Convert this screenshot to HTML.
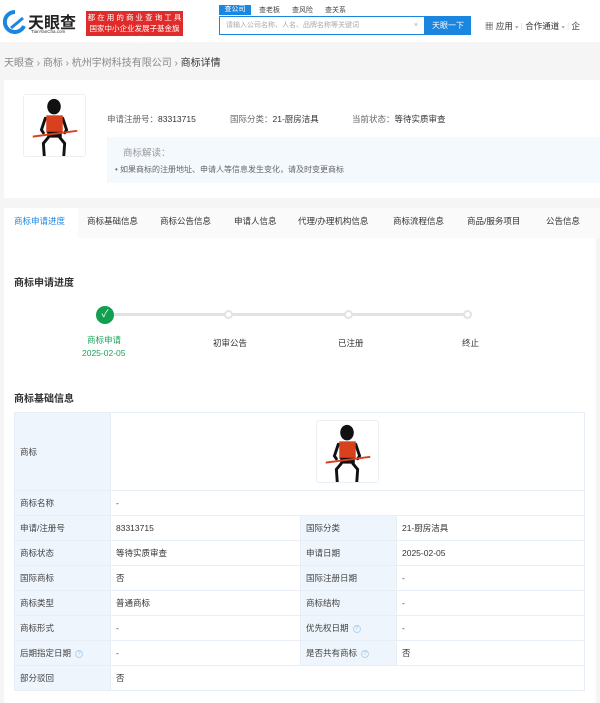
<!DOCTYPE html>
<html><head><meta charset="utf-8"><style>
*{margin:0;padding:0;box-sizing:border-box}
body{width:600px;height:703px;overflow:hidden;background:#f5f5f5;font-family:"Liberation Sans","Noto Sans CJK SC",sans-serif;font-size:9px;color:#333;position:relative}
.abs{position:absolute}
.hdr{left:0;top:0;width:600px;height:42px;background:#fff}
.card{background:#fff}
table{border-collapse:collapse;position:absolute;left:14px;top:412px;width:571px;font-size:8.5px}
td{border:1px solid #e8eef5;padding-left:5px;height:25px}
td.l{background:#eef5fc;color:#444}
.q{display:inline-block;width:8px;height:8px;border:1px solid #b8d4f0;border-radius:50%;font-size:6px;color:#9cc2ea;text-align:center;line-height:7px;margin-left:4px;vertical-align:middle}
.tab{position:absolute;top:215px;font-size:8.5px;color:#333}
</style></head><body>
<div class="abs hdr"></div>
<!-- logo -->
<svg class="abs" style="left:3px;top:10px" width="24" height="24" viewBox="0 0 24 24"><path d="M12 2a10 10 0 1 0 9 14" fill="none" stroke="#1b86e0" stroke-width="4"/><path d="M8 18 L20 8" stroke="#1b86e0" stroke-width="3"/></svg>
<div class="abs" style="left:28px;top:9px;font-size:16px;font-weight:bold;color:#222">天眼查</div>
<div class="abs" style="left:31px;top:29px;font-size:4.5px;color:#333">TianYanCha.com</div>
<div class="abs" style="left:86px;top:11px;width:97px;height:25px;background:#e12a2a;color:#fff;font-size:7.5px;text-align:center;line-height:11px;padding-top:1px">都 在 用 的 商 业 查 询 工 具<br>国家中小企业发展子基金旗下机构</div>
<div class="abs" style="left:219px;top:5px;width:32px;height:10px;background:#1b86e0;color:#fff;font-size:7px;text-align:center;line-height:10px">查公司</div>
<div class="abs" style="left:259px;top:5px;font-size:7px;color:#444">查老板</div>
<div class="abs" style="left:292px;top:5px;font-size:7px;color:#444">查风险</div>
<div class="abs" style="left:325px;top:5px;font-size:7px;color:#444">查关系</div>
<div class="abs" style="left:219px;top:16px;width:206px;height:19px;border:1px solid #1b86e0;background:#fff;font-size:7px;color:#aaa;line-height:17px;padding-left:6px">请输入公司名称、人名、品牌名称等关键词<span style="position:absolute;right:6px">×</span></div>
<div class="abs" style="left:425px;top:16px;width:46px;height:19px;background:#1b86e0;color:#fff;font-size:8px;text-align:center;line-height:19px">天眼一下</div>
<div class="abs" style="left:485px;top:20px;font-size:8.5px;color:#333">▦ 应用 <span style="color:#aaa;font-size:6px">▾</span> <span style="color:#ddd">|</span> 合作通道 <span style="color:#aaa;font-size:6px">▾</span> <span style="color:#ddd">|</span> 企</div>
<div class="abs" style="left:4px;top:54px;font-size:10px;color:#888">天眼查 › 商标 › 杭州宇树科技有限公司 › <span style="color:#333">商标详情</span></div>
<!-- top card -->
<div class="abs card" style="left:4px;top:80px;width:596px;height:118px"></div>
<svg class="abs" style="left:23px;top:94px;background:#fff;border:1px solid #eee;border-radius:3px" width="63" height="63" viewBox="0 0 63 63"><g stroke="#111" stroke-width="3" fill="none" stroke-linecap="round"><path d="M22 24 l-4 12 l2 3"/><path d="M40 24 l4 12 l-2 3"/><path d="M25 44 l-5 6 l1 14"/><path d="M37 44 l5 6 l-1 14"/></g><ellipse cx="31" cy="12" rx="7" ry="8" fill="#111"/><rect x="23" y="21" width="17" height="18" fill="#d8401e"/><rect x="24" y="38" width="15" height="6" fill="#111"/><path d="M9 42 L55 36 L55 38 L9 44Z" fill="#d8401e"/></svg>
<div class="abs" style="left:107px;top:113px;font-size:8.5px;color:#666">申请注册号：<b style="color:#333;font-weight:normal">83313715</b></div>
<div class="abs" style="left:230px;top:113px;font-size:8.5px;color:#666">国际分类：<span style="color:#333">21-厨房洁具</span></div>
<div class="abs" style="left:352px;top:113px;font-size:8.5px;color:#666">当前状态：<span style="color:#333">等待实质审查</span></div>
<div class="abs" style="left:107px;top:137px;width:493px;height:46px;background:#f4f9fe"></div>
<div class="abs" style="left:123px;top:145px;font-size:9.5px;color:#999">商标解读：</div>
<div class="abs" style="left:115px;top:164px;font-size:8px;color:#666">• 如果商标的注册地址、申请人等信息发生变化，请及时变更商标</div>
<!-- tabs -->
<div class="abs" style="left:4px;top:208px;width:596px;height:30px;background:#fafafa"></div>
<div class="abs" style="left:4px;top:208px;width:74px;height:30px;background:#fff"></div>
<div class="tab" style="left:14px;color:#1b86e0">商标申请进度</div>
<div class="tab" style="left:87px">商标基础信息</div>
<div class="tab" style="left:160px">商标公告信息</div>
<div class="tab" style="left:234px">申请人信息</div>
<div class="tab" style="left:298px">代理/办理机构信息</div>
<div class="tab" style="left:393px">商标流程信息</div>
<div class="tab" style="left:467px">商品/服务项目</div>
<div class="tab" style="left:546px">公告信息</div>
<!-- main -->
<div class="abs card" style="left:4px;top:238px;width:592px;height:465px"></div>
<div class="abs" style="left:14px;top:274px;font-size:10px;font-weight:bold;color:#333">商标申请进度</div>
<div class="abs" style="left:105px;top:313px;width:362px;height:3px;background:#e2e2e2"></div>
<div class="abs" style="left:96px;top:306px;width:18px;height:18px;border-radius:50%;background:#11a050;color:#fff;font-size:10px;text-align:center;line-height:18px">✓</div>
<div class="abs" style="left:224px;top:310px;width:9px;height:9px;border-radius:50%;background:#fff;border:2px solid #e2e2e2"></div>
<div class="abs" style="left:344px;top:310px;width:9px;height:9px;border-radius:50%;background:#fff;border:2px solid #e2e2e2"></div>
<div class="abs" style="left:463px;top:310px;width:9px;height:9px;border-radius:50%;background:#fff;border:2px solid #e2e2e2"></div>
<div class="abs" style="left:87px;top:334px;font-size:8.5px;color:#1aa55a">商标申请</div>
<div class="abs" style="left:82px;top:348px;font-size:8.5px;color:#1aa55a">2025-02-05</div>
<div class="abs" style="left:213px;top:337px;font-size:8.5px">初审公告</div>
<div class="abs" style="left:338px;top:337px;font-size:8.5px">已注册</div>
<div class="abs" style="left:462px;top:337px;font-size:8.5px">终止</div>
<div class="abs" style="left:14px;top:390px;font-size:10px;font-weight:bold;color:#333">商标基础信息</div>
<table>
<col style="width:96px"><col style="width:190px"><col style="width:96px"><col>
<tr><td class="l" style="height:78px">商标</td><td colspan="3"></td></tr>
<tr><td class="l">商标名称</td><td colspan="3">-</td></tr>
<tr><td class="l">申请/注册号</td><td>83313715</td><td class="l">国际分类</td><td>21-厨房洁具</td></tr>
<tr><td class="l">商标状态</td><td>等待实质审查</td><td class="l">申请日期</td><td>2025-02-05</td></tr>
<tr><td class="l">国际商标</td><td>否</td><td class="l">国际注册日期</td><td>-</td></tr>
<tr><td class="l">商标类型</td><td>普通商标</td><td class="l">商标结构</td><td>-</td></tr>
<tr><td class="l">商标形式</td><td>-</td><td class="l">优先权日期<span class="q">?</span></td><td>-</td></tr>
<tr><td class="l">后期指定日期<span class="q">?</span></td><td>-</td><td class="l">是否共有商标<span class="q">?</span></td><td>否</td></tr>
<tr><td class="l">部分驳回</td><td colspan="3">否</td></tr>
</table>
<svg class="abs" style="left:316px;top:420px;background:#fff;border:1px solid #eee;border-radius:3px" width="63" height="63" viewBox="0 0 63 63"><g stroke="#111" stroke-width="3" fill="none" stroke-linecap="round"><path d="M22 24 l-4 12 l2 3"/><path d="M40 24 l4 12 l-2 3"/><path d="M25 44 l-5 6 l1 14"/><path d="M37 44 l5 6 l-1 14"/></g><ellipse cx="31" cy="12" rx="7" ry="8" fill="#111"/><rect x="23" y="21" width="17" height="18" fill="#d8401e"/><rect x="24" y="38" width="15" height="6" fill="#111"/><path d="M9 42 L55 36 L55 38 L9 44Z" fill="#d8401e"/></svg>
</body></html>
